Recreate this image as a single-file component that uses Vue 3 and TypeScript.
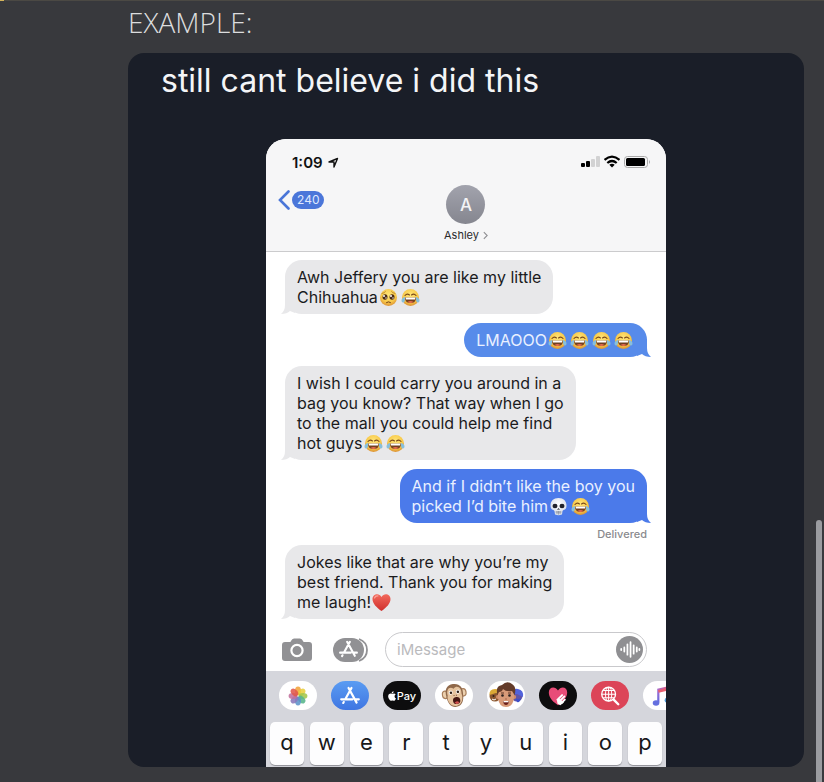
<script setup lang="ts">
import { ref } from 'vue'

type Emoji = 'joy' | 'plead' | 'skull' | 'heart'

interface Line {
  text: string
  emojis?: Emoji[]
}

interface Message {
  id: number
  mine: boolean
  tone?: 'light' | 'deep'
  lines: Line[]
  status?: string
}

const messages: Message[] = [
  {
    id: 1,
    mine: false,
    lines: [
      { text: 'Awh Jeffery you are like my little' },
      { text: 'Chihuahua', emojis: ['plead', 'joy'] },
    ],
  },
  { id: 2, mine: true, tone: 'light', lines: [{ text: 'LMAOOO', emojis: ['joy', 'joy', 'joy', 'joy'] }] },
  {
    id: 3,
    mine: false,
    lines: [
      { text: 'I wish I could carry you around in a' },
      { text: 'bag you know? That way when I go' },
      { text: 'to the mall you could help me find' },
      { text: 'hot guys', emojis: ['joy', 'joy'] },
    ],
  },
  {
    id: 4,
    mine: true,
    tone: 'deep',
    lines: [
      { text: 'And if I didn’t like the boy you' },
      { text: 'picked I’d bite him', emojis: ['skull', 'joy'] },
    ],
    status: 'Delivered',
  },
  {
    id: 5,
    mine: false,
    lines: [
      { text: 'Jokes like that are why you’re my' },
      { text: 'best friend. Thank you for making' },
      { text: 'me laugh!', emojis: ['heart'] },
    ],
  },
]

const emojiNames: Record<Emoji, string> = {
  joy: 'face with tears of joy',
  plead: 'pleading face',
  skull: 'skull',
  heart: 'red heart',
}

const petals = ['#f2a33a', '#e8cf3d', '#a3c64b', '#57b58a', '#5c93c9', '#8a78bb', '#c2709c', '#e0584b']
const keys = 'qwertyuiop'.split('')
const draft = ref('')
</script>

<template>
  <svg class="sprite" aria-hidden="true">
    <defs>
      <radialGradient id="face" cx="50%" cy="35%" r="65%">
        <stop offset="0" stop-color="#ffe67a" />
        <stop offset="0.65" stop-color="#f8c94a" />
        <stop offset="1" stop-color="#dc9236" />
      </radialGradient>
      <radialGradient id="bone" cx="50%" cy="35%" r="65%">
        <stop offset="0" stop-color="#ffffff" />
        <stop offset="1" stop-color="#d3dae6" />
      </radialGradient>
      <linearGradient id="red" x1="0" y1="0" x2="0" y2="1">
        <stop offset="0" stop-color="#f2695c" />
        <stop offset="1" stop-color="#cf2f2c" />
      </linearGradient>
      <linearGradient id="note" x1="0" y1="1" x2="1" y2="0">
        <stop offset="0" stop-color="#5f6be0" />
        <stop offset="0.4" stop-color="#a66ad0" />
        <stop offset="1" stop-color="#ec5a6e" />
      </linearGradient>
      <symbol id="joy" viewBox="0 0 38 38">
        <circle cx="19" cy="19" r="17" fill="url(#face)" />
        <path d="M8 15q4-5 9-1M21 14q5-4 9 1" fill="none" stroke="#7b4a1a" stroke-width="2.200" stroke-linecap="round" />
        <path d="M8 19h22q0 11-11 11T8 19z" fill="#74401f" />
        <path d="M9 19h20l-1 4H10z" fill="#fff" />
        <path d="M13 28q6-4 12 0-6 4-12 0z" fill="#e66a50" />
        <path d="M8 18q-7 2-7 7 0 4 3 4 5 0 4-11zM30 18q7 2 7 7 0 4-3 4-5 0-4-11z" fill="#86bfdc" />
      </symbol>
      <symbol id="plead" viewBox="0 0 38 38">
        <circle cx="19" cy="19" r="17" fill="url(#face)" />
        <ellipse cx="12" cy="18" rx="5" ry="5.500" fill="#4d2c17" />
        <ellipse cx="26" cy="18" rx="5" ry="5.500" fill="#4d2c17" />
        <circle cx="10" cy="16" r="2" fill="#fff" />
        <circle cx="24" cy="16" r="2" fill="#fff" />
        <circle cx="14" cy="20" r="1.400" fill="#fff" />
        <circle cx="28" cy="20" r="1.400" fill="#fff" />
        <path d="M6 11q5-1 7-4M32 11q-5-1-7-4" fill="none" stroke="#b07a2a" stroke-width="1.600" stroke-linecap="round" />
        <path d="M15 29q4-3 8 0" fill="none" stroke="#70401b" stroke-width="2" stroke-linecap="round" />
      </symbol>
      <symbol id="skull" viewBox="0 0 38 38">
        <path d="M19 2C9 2 3 8 3 17c0 4 1 6 3 8 2 1 4 1 5 3l1 7q7 3 14 0l1-7c1-2 3-2 5-3 2-2 3-4 3-8C35 8 29 2 19 2z" fill="url(#bone)" />
        <ellipse cx="12" cy="18" rx="5" ry="4.500" fill="#20222b" />
        <ellipse cx="26" cy="18" rx="5" ry="4.500" fill="#20222b" />
        <path d="M19 22l-3 4 3-1 3 1z" fill="#30323c" />
        <path d="M13 30h12M16 28v6M19 28v7M22 28v6" stroke="#6d7482" stroke-width="1.100" fill="none" />
      </symbol>
      <symbol id="heart" viewBox="0 0 38 38">
        <path d="M19 36C9 29 1 21 1 12 1 2 14-1 19 8 24-1 37 2 37 12c0 9-8 17-18 24z" fill="url(#red)" />
        <path d="M5 10q2-5 7-4" fill="none" stroke="#f9a59a" stroke-width="2.400" stroke-linecap="round" />
      </symbol>
      <symbol id="store" viewBox="0 0 24 24">
        <g fill="none" stroke="currentColor" stroke-width="2.400" stroke-linecap="round">
          <path d="M13.600 3.200L7 15.200M10.400 3.200l8.800 16M2.400 15.600h12.200M18.400 15.600h3.200M5.200 18.600l-.6 1" />
        </g>
      </symbol>
    </defs>
  </svg>

  <main class="page">
    <div class="progress"></div>
    <h1 class="label">EXAMPLE:</h1>

    <article class="card">
      <h2 class="caption">still cant believe i did this</h2>

      <section class="phone">
        <header class="top">
          <div class="status">
            <span class="time">1:09</span>
            <svg class="locate" viewBox="0 0 22 22" aria-hidden="true">
              <path d="M2 10L19 3l-7 17v-10z" fill="none" stroke="#111" stroke-width="2.800" stroke-linejoin="round" />
            </svg>
            <svg class="indicators" viewBox="0 0 70 14" aria-hidden="true">
              <rect x="0" y="8" width="4" height="4" rx="1" />
              <rect x="5" y="6" width="4" height="6" rx="1" />
              <rect x="10" y="4" width="4" height="8" rx="1" fill="#d2d2d3" />
              <rect x="15" y="1" width="4" height="11" rx="1" fill="#d2d2d3" />
              <g fill="none" stroke="#000" stroke-width="2.200">
                <path d="M23.500 4.800q7.500-6.400 15 0M26.300 8q4.700-4 9.400 0" />
              </g>
              <path d="M28.300 9.800q2.700-2.200 5.400 0L31 12.500z" />
              <rect x="43.500" y="1.500" width="23" height="11" rx="3" fill="none" stroke="#aaa" />
              <rect x="45" y="3" width="19" height="8" rx="1.500" />
              <path d="M68 5q2 2 0 4z" fill="#aaa" />
            </svg>
          </div>

          <div class="nav">
            <button class="back" type="button" aria-label="Back, 240 unread">
              <svg class="chevron" viewBox="0 0 12 20" aria-hidden="true">
                <path d="M10.500 1.500L2 10l8.500 8.500" fill="none" stroke="#4a76d8" stroke-width="2.600" stroke-linecap="round" />
              </svg>
              <span class="count">240</span>
            </button>
            <button class="contact" type="button">
              <span class="avatar">A</span>
              <span class="name">
                Ashley
                <svg class="more" viewBox="0 0 6 10" aria-hidden="true">
                  <path d="M1 1l4 4-4 4" fill="none" stroke="#8e8e92" stroke-width="1.300" />
                </svg>
              </span>
            </button>
          </div>
        </header>

        <div class="thread">
          <div v-for="m in messages" :key="m.id" class="row" :class="{ mine: m.mine }">
            <p class="bubble" :class="m.tone">
              <span v-for="(line, i) in m.lines" :key="i" class="line">{{ line.text }}<svg
                v-for="(e, j) in line.emojis"
                :key="j"
                class="emoji"
                role="img"
                :aria-label="emojiNames[e]"
              ><use :href="'#' + e" /></svg></span>
              <svg class="tail" viewBox="0 0 15 18" aria-hidden="true">
                <path d="M4 0v9Q4 15 0 18q6 0 9-3l5 2V0z" fill="currentColor" />
              </svg>
            </p>
            <small v-if="m.status" class="delivered">{{ m.status }}</small>
          </div>
        </div>

        <form class="composer" @submit.prevent>
          <button class="tool" type="button" aria-label="Camera">
            <svg class="camera" viewBox="0 0 30 24">
              <path d="M9 3q1-2.500 3-2.500h6q2 0 3 2.500l.6 1H27q3 0 3 3v13q0 3-3 3H3q-3 0-3-3V7q0-3 3-3h5.400z" fill="#919194" />
              <circle cx="15" cy="12.500" r="5.600" fill="none" stroke="#fff" stroke-width="2.200" />
            </svg>
          </button>
          <button class="tool apps" type="button" aria-label="Apps">
            <svg class="drawer" viewBox="0 0 36 26">
              <path d="M26 2q8 3 8 11t-8 11" fill="none" stroke="#919194" stroke-width="1.800" />
              <rect x="0" y="1" width="31" height="24" rx="12" fill="#919194" />
              <svg x="5" y="2" width="21" height="21" color="#fff"><use href="#store" /></svg>
            </svg>
          </button>
          <div class="field">
            <input v-model="draft" class="input" type="text" placeholder="iMessage" aria-label="iMessage" />
            <button class="voice" type="button" aria-label="Record audio">
              <svg viewBox="0 0 26 26">
                <g stroke="#fff" stroke-width="1.700" stroke-linecap="round">
                  <path d="M5 12.500v1M8 11v4M11 8v10M14 6v14M17 9v8M20 11v4M22.500 12.500v1" />
                </g>
              </svg>
            </button>
          </div>
        </form>

        <div class="keyboard">
          <div class="shelf">
            <button class="app" type="button" aria-label="Photos">
              <svg class="glyph" viewBox="0 0 24 24">
                <ellipse
                  v-for="(color, i) in petals"
                  :key="color"
                  cx="12"
                  cy="6.500"
                  rx="3.300"
                  ry="4.800"
                  :fill="color"
                  fill-opacity="0.880"
                  :transform="`rotate(${i * 45} 12 12)`"
                />
              </svg>
            </button>
            <button class="app blue" type="button" aria-label="App Store">
              <svg class="glyph" viewBox="0 0 24 24"><use href="#store" /></svg>
            </button>
            <button class="app black pay" type="button">
              <svg class="apple" viewBox="0 0 20 24" aria-hidden="true">
                <path d="M14 0q.4 3-1.500 4.800-1.600 1.500-3.300 1.300Q9 3.500 10.800 1.600 12.200.2 14 0zM19.200 8.200q-3 1.800-2.800 5 .2 3.800 3.600 5-1.200 3-3 5-1.200 1.200-2.700.7-3.500-1.300-6.400 0-1.700.6-3.200-1Q0 17.500.3 12q.6-5.500 5.600-6 1.200 0 2.500.6 1.600.7 3 .1 5-2 7.800 1.500z" fill="#fff" />
              </svg>
              <span>Pay</span>
            </button>
            <button class="app" type="button" aria-label="Animoji">
              <svg class="glyph wide" viewBox="0 0 28 26">
                <g transform="rotate(-8 14 13)">
                  <ellipse cx="4.500" cy="11" rx="3.500" ry="4.500" fill="#a97f5b" />
                  <ellipse cx="23.500" cy="11" rx="3.500" ry="4.500" fill="#a97f5b" />
                  <ellipse cx="4.500" cy="11" rx="2.300" ry="3.200" fill="#ecd0ae" />
                  <ellipse cx="23.500" cy="11" rx="2.300" ry="3.200" fill="#ecd0ae" />
                  <path d="M14 1C7 1 4.500 6 5.500 13 6 20 9 25 14.500 25S23 20 23 13C24 6 21 1 14 1z" fill="#8f684a" />
                  <path d="M14 6C10 2 6 6 7 12 5 18 9 24 14.500 24S23 18 21.500 12C22.500 6 18 2 14 6z" fill="#e6c49f" />
                  <circle cx="10.500" cy="9.500" r="2.100" fill="#fff" />
                  <circle cx="18" cy="9.500" r="2.100" fill="#fff" />
                  <circle cx="10.700" cy="9.700" r="1.300" fill="#2d1d15" />
                  <circle cx="18" cy="9.700" r="1.300" fill="#2d1d15" />
                  <path d="M13 13h1M15.500 13h1" stroke="#73452f" stroke-width="1" />
                  <ellipse cx="15.500" cy="18.500" rx="3.800" ry="3.700" fill="#441713" />
                  <path d="M13 20.600q2.500-2.400 5 0-2.500 3-5 0z" fill="#d25350" />
                </g>
              </svg>
            </button>
            <button class="app" type="button" aria-label="Memoji">
              <svg class="glyph full" viewBox="0 0 36 28">
                <circle cx="7" cy="14" r="5.500" fill="#8b5730" />
                <path d="M1.500 13Q1 7 7 7q5 0 6 5l-5-1z" fill="#dba936" />
                <circle cx="5.500" cy="14" r="1" fill="#302018" />
                <path d="M4 17q2 2 4 0" stroke="#fff" fill="none" />
                <circle cx="29" cy="14" r="5.500" fill="#6154a7" />
                <path d="M23 12q2-6 7-5 6 1 5 8l-6-3z" fill="#5263dc" />
                <path d="M27 16q3 2 6 0-1 5-4 4z" fill="#3d4ec8" />
                <circle cx="9.800" cy="15" r="2" fill="#cf8b68" />
                <circle cx="26.200" cy="15" r="2" fill="#cf8b68" />
                <path d="M10 10q0-7 8-7t8 7v6q-1 9-8 9t-8-9z" fill="#d89a78" />
                <path d="M9.500 13Q7 4 14 3q5-5 10-1 5 3 2.500 11L24 9q-6 1-9-2-1 3-4 3z" fill="#633b29" />
                <circle cx="14.500" cy="13.500" r="1.300" fill="#2b211f" />
                <circle cx="21.500" cy="13.500" r="1.300" fill="#2b211f" />
                <path d="M13 11h3M20 11h3" stroke="#5c3527" />
                <path d="M17 17h2" stroke="#a86549" />
                <path d="M15 19h6q-.5 4-3 4t-3-4z" fill="#6c211c" />
                <path d="M15.500 19h5v1.300h-5z" fill="#fff" />
              </svg>
            </button>
            <button class="app black" type="button" aria-label="Digital Touch">
              <svg class="glyph" viewBox="0 0 24 24">
                <path d="M12 22C4 17 2 12 2 8c0-6 7-7 10-2 3-5 10-4 10 2 0 4-2 9-10 14z" fill="#e84c78" />
                <path d="M11.500 16l5-5M13.500 18l5.500-5.500M16 19.500l3.500-3.500" stroke="#fff" stroke-width="2" stroke-linecap="round" />
                <path d="M10.500 15.500l1 5 3 1.500 4-3-5-4z" fill="#fff" />
              </svg>
            </button>
            <button class="app red" type="button" aria-label="Image search">
              <svg class="glyph" viewBox="0 0 24 24" fill="none" stroke="#fff">
                <circle cx="10.500" cy="10" r="7.500" stroke-width="1.500" />
                <ellipse cx="10.500" cy="10" rx="3.400" ry="7.500" stroke-width="1.100" />
                <path d="M10.500 2.500v15M3 10h15M4.500 6h12M4.500 14h12" stroke-width="1.100" />
                <path d="M16 16l5 5" stroke-width="2.600" stroke-linecap="round" />
              </svg>
            </button>
            <button class="app" type="button" aria-label="Music">
              <svg class="glyph" viewBox="0 0 24 24">
                <path d="M8 19V5l13-3v14" fill="none" stroke="url(#note)" stroke-width="2.400" />
                <path d="M8 7l13-3" stroke="#e85f70" stroke-width="3" />
                <ellipse cx="5.500" cy="19.500" rx="3.600" ry="3" fill="#6570df" />
                <ellipse cx="18.500" cy="16.500" rx="3.600" ry="3" fill="#4f9bd8" />
              </svg>
            </button>
          </div>
          <div class="keys">
            <button v-for="key in keys" :key="key" class="key" type="button" @click="draft += key">{{ key }}</button>
          </div>
        </div>
      </section>
    </article>

    <div class="scrollbar"></div>
  </main>
</template>

<style>
body {
  background: #38393d;
}
</style>

<style scoped>
* {
  box-sizing: border-box;
}

button {
  border: 0;
  padding: 0;
  background: none;
  color: inherit;
  font: inherit;
}

svg {
  display: block;
}

.sprite {
  position: absolute;
  width: 0;
  height: 0;
}

.page {
  position: relative;
  min-height: 100vh;
  padding: 0 20px 15px 128px;
  border-top: 1px solid #4b4944;
  background: #38393d;
  font-family: Inter, "Liberation Sans", sans-serif;
}

.progress {
  position: absolute;
  top: -1px;
  left: 0;
  width: 4px;
  height: 1px;
  background: #d3b45c;
}

.label {
  margin: 0;
  padding: 1px 0 11px;
  color: #dcddde;
  font: 300 28px/40px "Open Sans", "Noto Sans", sans-serif;
}

.card {
  overflow: hidden;
  border-radius: 16px;
  background: #1a1e28;
}

.caption {
  margin: 0;
  padding: 8px 33px 38px;
  color: #f4f5f7;
  font-weight: 400;
  font-size: 32px;
  line-height: 40px;
}

.phone {
  width: 100%;
  max-width: 400px;
  margin: 0 auto;
  overflow: hidden;
  border-radius: 20px 20px 0 0;
  background: #fff;
}

.top {
  padding: 13px 12px 8px;
  border-bottom: 1px solid #cbcbcd;
  background: #f6f6f7;
}

.status {
  display: flex;
  align-items: center;
  height: 20px;
  padding: 0 3px 0 14px;
  color: #111;
}

.time {
  font-weight: 600;
  font-size: 15px;
}

.locate {
  width: 11px;
  height: 11px;
  margin-left: 5px;
}

.indicators {
  width: 70px;
  height: 14px;
  margin-left: auto;
}

.nav {
  display: grid;
  grid-template-columns: 1fr auto 1fr;
  align-items: start;
  padding-top: 13px;
}

.back {
  display: flex;
  align-items: center;
  gap: 2px;
  padding-top: 5px;
}

.chevron {
  width: 12px;
  height: 20px;
}

.count {
  padding: 0 5px;
  border-radius: 10px;
  background: #4b76d9;
  color: #dfe8ff;
  font-size: 12px;
  line-height: 18px;
}

.contact {
  display: flex;
  flex-direction: column;
  align-items: center;
  gap: 3px;
}

.avatar {
  width: 39px;
  height: 39px;
  border-radius: 50%;
  background: linear-gradient(#a2a3ad, #85868f);
  color: #f4f4f6;
  font-weight: 500;
  font-size: 17px;
  line-height: 40px;
}

.name {
  display: flex;
  align-items: center;
  gap: 4px;
  color: #2a2a2c;
  font-size: 11px;
  line-height: 16px;
}

.more {
  width: 5px;
  height: 9px;
}

.thread {
  display: flex;
  flex-direction: column;
  gap: 9px;
  padding: 8px 19px 13px;
}

.row {
  display: flex;
  flex-direction: column;
  align-items: flex-start;
}

.row.mine {
  align-items: flex-end;
}

.bubble {
  position: relative;
  margin: 0;
  padding: 7px 12px;
  border-radius: 17px;
  background: currentColor;
  color: #e8e8ea;
  font-size: 16px;
  line-height: 20px;
}

.bubble.light {
  color: #578bea;
}

.bubble.deep {
  color: #4b7aea;
}

.line {
  display: flex;
  align-items: center;
  color: #1b1b1d;
  white-space: nowrap;
}

.mine .line {
  color: #e9f0ff;
}

.emoji {
  width: 19px;
  height: 19px;
  margin: 0 2px 0 1px;
}

.tail {
  position: absolute;
  bottom: 0;
  left: -4px;
  width: 15px;
  height: 18px;
}

.mine .tail {
  right: -4px;
  left: auto;
  transform: scaleX(-1);
}

.delivered {
  height: 13px;
  padding-top: 3px;
  color: #8a8a8e;
  font-weight: 500;
  font-size: 11px;
  line-height: 16px;
}

.composer {
  display: flex;
  align-items: center;
  gap: 16px;
  padding: 0 19px 4px 16px;
}

.camera {
  width: 30px;
  height: 24px;
}

.tool.apps {
  margin-left: 5px;
}

.drawer {
  width: 36px;
  height: 26px;
}

.field {
  display: flex;
  flex: 1;
  align-items: center;
  min-width: 0;
  height: 35px;
  padding: 0 3px 0 11px;
  border: 1px solid #c9c9cc;
  border-radius: 18px;
}

.input {
  flex: 1;
  min-width: 0;
  padding: 0;
  border: 0;
  outline: 0;
  background: none;
  color: #1b1b1d;
  font: 400 15px/20px Inter, "Liberation Sans", sans-serif;
}

.input::placeholder {
  color: #bababd;
}

.voice {
  width: 27px;
  height: 27px;
  border-radius: 50%;
  background: #8f8f92;
}

.keyboard {
  padding: 10px 4px 2px;
  background: #d5d6dc;
}

.shelf {
  display: flex;
  gap: 14px;
  margin: 0 -4px 12px;
  padding-left: 13px;
  overflow: hidden;
}

.app {
  display: flex;
  flex: none;
  align-items: center;
  justify-content: center;
  width: 38px;
  height: 29px;
  border-radius: 15px;
  background: #fff;
  color: #fff;
}

.app.blue {
  background: linear-gradient(#5a9cf2, #3f76e2);
}

.app.black {
  background: #0d0d0e;
}

.app.red {
  background: #dc4558;
}

.app.pay {
  gap: 1px;
  font-weight: 500;
  font-size: 11px;
}

.apple {
  width: 8px;
  height: 10px;
}

.glyph {
  width: 22px;
  height: 22px;
}

.glyph.wide {
  width: 27px;
  height: 25px;
}

.glyph.full {
  width: 36px;
  height: 28px;
}

.keys {
  display: flex;
  gap: 6px;
}

.key {
  flex: 1;
  min-width: 0;
  height: 43px;
  padding-bottom: 3px;
  border-radius: 5px;
  background: #fdfdfe;
  box-shadow: 0 1px 1px #8f9096;
  color: #18181a;
  font-size: 22px;
  line-height: 40px;
}

.scrollbar {
  position: fixed;
  top: 520px;
  right: 2px;
  bottom: -6px;
  width: 6px;
  border-radius: 3px;
  background: #9b9ca0;
}
</style>
